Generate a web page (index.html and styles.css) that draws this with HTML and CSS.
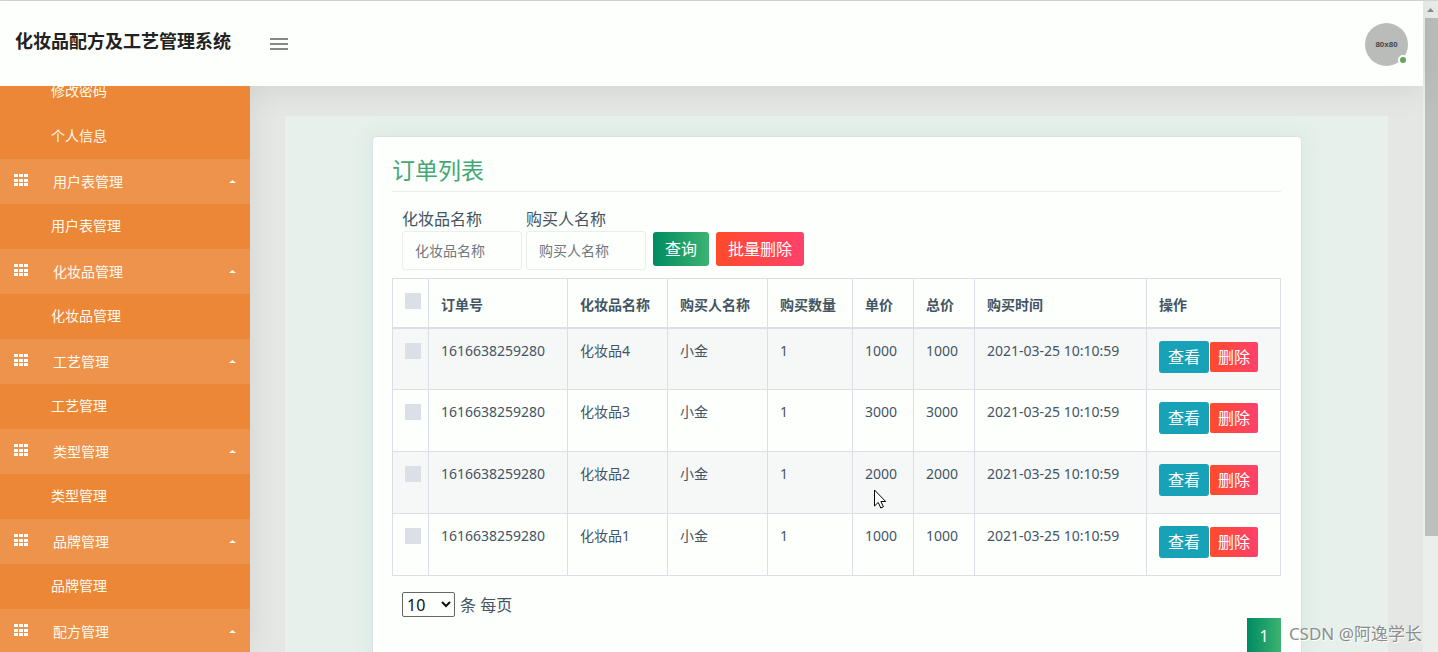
FILE: index.html
```html
<!DOCTYPE html>
<html lang="zh-CN">
<head>
<meta charset="utf-8">
<title>化妆品配方及工艺管理系统</title>
<link rel="stylesheet" href="styles.css">
</head>
<body>
<svg class="defs" aria-hidden="true">
  <symbol id="grid" viewBox="0 0 14 12"><path d="M0 0h4v3H0zM5 0h4v3H5zM10 0h4v3h-4zM0 5h4v3H0zM5 5h4v3H5zM10 5h4v3h-4zM0 9h4v3H0zM5 9h4v3H5zM10 9h4v3h-4z"/></symbol>
  <symbol id="caret" viewBox="0 0 7 3"><path d="M0 3L3.5 0L7 3z"/></symbol>
</svg>
<div class="window">
  <div class="page">
    <header class="topbar">
      <h1 class="brand">化妆品配方及工艺管理系统</h1>
      <button class="menu-toggle" type="button" aria-label="菜单"><svg width="18" height="12" viewBox="0 0 18 12"><path d="M0 0h18v2H0zM0 5h18v2H0zM0 10h18v2H0z"/></svg></button>
      <div class="avatar">80x80<span class="status"></span></div>
    </header>
    <div class="body">
      <nav class="sidebar">
        <div class="menu">
          <a class="sub" href="#">修改密码</a>
          <a class="sub" href="#">个人信息</a>
          <button class="group" type="button"><svg class="ico"><use href="#grid"/></svg>用户表管理<svg class="caret"><use href="#caret"/></svg></button>
          <a class="sub" href="#">用户表管理</a>
          <button class="group" type="button"><svg class="ico"><use href="#grid"/></svg>化妆品管理<svg class="caret"><use href="#caret"/></svg></button>
          <a class="sub" href="#">化妆品管理</a>
          <button class="group" type="button"><svg class="ico"><use href="#grid"/></svg>工艺管理<svg class="caret"><use href="#caret"/></svg></button>
          <a class="sub" href="#">工艺管理</a>
          <button class="group" type="button"><svg class="ico"><use href="#grid"/></svg>类型管理<svg class="caret"><use href="#caret"/></svg></button>
          <a class="sub" href="#">类型管理</a>
          <button class="group" type="button"><svg class="ico"><use href="#grid"/></svg>品牌管理<svg class="caret"><use href="#caret"/></svg></button>
          <a class="sub" href="#">品牌管理</a>
          <button class="group" type="button"><svg class="ico"><use href="#grid"/></svg>配方管理<svg class="caret"><use href="#caret"/></svg></button>
        </div>
      </nav>
      <main class="content">
        <div class="panel">
          <section class="card">
            <h2 class="title">订单列表</h2>
            <form class="filters">
              <div class="field"><label for="f1">化妆品名称</label><input id="f1" type="text" placeholder="化妆品名称"></div>
              <div class="field"><label for="f2">购买人名称</label><input id="f2" type="text" placeholder="购买人名称"></div>
              <div class="actions">
                <button class="btn green" type="button">查询</button>
                <button class="btn red" type="button">批量删除</button>
              </div>
            </form>
            <table class="orders">
              <colgroup><col class="c-check"><col class="c-order"><col class="c-name"><col class="c-name"><col class="c-count"><col class="c-price"><col class="c-price"><col class="c-time"><col></colgroup>
              <thead>
                <tr><th><input type="checkbox" aria-label="全选"></th><th>订单号</th><th>化妆品名称</th><th>购买人名称</th><th>购买数量</th><th>单价</th><th>总价</th><th>购买时间</th><th>操作</th></tr>
              </thead>
              <tbody>
                <tr><td><input type="checkbox" aria-label="选择化妆品4"></td><td>1616638259280</td><td>化妆品4</td><td>小金</td><td>1</td><td>1000</td><td>1000</td><td>2021-03-25 10:10:59</td><td><div class="ops"><button class="btn view" type="button">查看</button><button class="btn red small" type="button">删除</button></div></td></tr>
                <tr><td><input type="checkbox" aria-label="选择化妆品3"></td><td>1616638259280</td><td>化妆品3</td><td>小金</td><td>1</td><td>3000</td><td>3000</td><td>2021-03-25 10:10:59</td><td><div class="ops"><button class="btn view" type="button">查看</button><button class="btn red small" type="button">删除</button></div></td></tr>
                <tr><td><input type="checkbox" aria-label="选择化妆品2"></td><td>1616638259280</td><td>化妆品2</td><td>小金</td><td>1</td><td>2000</td><td>2000</td><td>2021-03-25 10:10:59</td><td><div class="ops"><button class="btn view" type="button">查看</button><button class="btn red small" type="button">删除</button></div></td></tr>
                <tr><td><input type="checkbox" aria-label="选择化妆品1"></td><td>1616638259280</td><td>化妆品1</td><td>小金</td><td>1</td><td>1000</td><td>1000</td><td>2021-03-25 10:10:59</td><td><div class="ops"><button class="btn view" type="button">查看</button><button class="btn red small" type="button">删除</button></div></td></tr>
              </tbody>
            </table>
            <div class="page-size">
              <select id="size"><option>10</option><option>20</option></select>
              <label for="size">条 每页</label>
            </div>
            <div class="pager"><button type="button">1</button></div>
          </section>
        </div>
      </main>
    </div>
  </div>
  <div class="scrollbar"><svg width="7" height="4" viewBox="0 0 7 4"><path d="M0 4L3.5 0L7 4z"/></svg><div class="thumb"></div></div>
</div>
<span class="watermark">CSDN @阿逸学长</span>
<svg class="cursor" width="13" height="20" viewBox="0 0 13 20"><path d="M.5 1v16l3.7-3.6 2.6 5.6 2.6-1.2-2.5-5.3h4.8z"/></svg>
</body>
</html>
```
FILE: styles.css
```css
* { box-sizing: border-box; }
body {
  margin: 0;
  overflow: hidden;
  background: #fcfffc;
  color: #455463;
  font: 14px/20px "Noto Sans", "Noto Sans CJK SC", sans-serif;
}
button, input, select { font: inherit; color: inherit; margin: 0; }
button { border: 0; cursor: pointer; }
.defs { position: absolute; width: 0; height: 0; }
.window { display: flex; height: 100vh; border-top: 1px solid #d7d8dd; }
.page { flex: 1; min-width: 0; display: flex; flex-direction: column; }

.topbar {
  position: relative;
  z-index: 2;
  flex: none;
  display: flex;
  align-items: center;
  height: 85px;
  padding: 0 15px;
  background: #fcfffc;
  box-shadow: 0 0 36px rgba(0, 0, 0, .1);
}
.brand { margin: 0 39px 5px 0; font-size: 18px; line-height: 24px; color: #222; }
.menu-toggle { display: flex; padding: 0; background: none; fill: #858885; }
.avatar {
  position: relative;
  width: 43px;
  height: 43px;
  margin: 2px 0 0 auto;
  border-radius: 50%;
  background: #babcba;
  color: #444;
  font: bold 8px/43px "Liberation Sans", sans-serif;
  text-align: center;
}
.status {
  position: absolute;
  right: 0;
  bottom: 1px;
  width: 10px;
  height: 10px;
  border: 2px solid #fcfffc;
  border-radius: 50%;
  background: #69a35f;
}

.body { flex: 1; min-height: 0; display: flex; }
.sidebar {
  position: relative;
  z-index: 3;
  flex: none;
  width: 250px;
  background: #eb8736;
  box-shadow: 0 0 30px rgba(0, 0, 0, .08);
  clip-path: inset(0 -40px 0 0);
}
.menu { display: flex; flex-direction: column; margin-top: -17px; }
.sub, .group { flex: none; height: 45px; color: #fffaf0; }
.sub { padding-left: 51px; line-height: 44px; text-decoration: none; }
.group {
  display: flex;
  align-items: center;
  padding: 0 14px;
  background: #ed934b;
  text-align: left;
}
.ico { width: 14px; height: 12px; margin: 0 25px 3px 0; fill: #fff; }
.caret { width: 7px; height: 3px; margin-left: auto; fill: #fff; }

.content { flex: 1; min-width: 0; padding: 30px 35px 0; background: #e5e7e4; overflow: hidden; }
.panel { padding: 20px 86px 20px 87px; background: #e7f0ea; }
.card {
  padding: 20px 20px 20px 19px;
  border: 1px solid #dce1e8;
  border-radius: 4px;
  background: #fcfffc;
  box-shadow: 0 0 20px rgba(120, 190, 195, .16);
}
.title {
  margin: 0 0 15px;
  padding-bottom: 7px;
  border-bottom: 1px solid #e8edea;
  color: #43a873;
  font-size: 23px;
  line-height: 27px;
  font-weight: 400;
}
.filters { display: flex; align-items: flex-end; gap: 4px; padding: 0 10px; font-size: 16px; line-height: 24px; }
.field { display: flex; flex-direction: column; width: 120px; }
.field input {
  width: 100%;
  height: 39px;
  padding: 0 12px;
  border: 1px solid #e7f0ea;
  border-radius: 3px;
  background: #fcfffc;
  font-size: 14px;
}
.field input::placeholder { color: #73787e; opacity: 1; }
.actions { display: flex; gap: 7px; padding: 0 0 4px 3px; }
.btn { height: 34px; padding: 0 12px; border-radius: 3px; color: #fff; font-size: 16px; line-height: 24px; }
.green, .pager button { background: linear-gradient(90deg, #008b62, #3cb371); }
.red { background: linear-gradient(90deg, #ff4b2b, #ff416c); }
.view { height: 32px; padding: 0 9px; background: #17a2b8; }
.small { height: 30px; padding: 0 8px; border-radius: 2px; }

.orders { width: 100%; margin-top: 8px; border-collapse: collapse; table-layout: fixed; }
.c-check { width: 36px; }
.c-order { width: 139px; }
.c-name { width: 100px; }
.c-count { width: 85px; }
.c-price { width: 61px; }
.c-time { width: 172px; }
.orders th, .orders td {
  padding: 12px 0 0 12px;
  border: 1px solid #dadee5;
  text-align: left;
  vertical-align: top;
  white-space: nowrap;
}
.orders th { height: 49px; padding-top: 16px; border-bottom: 2px solid #dadee5; }
.orders td { height: 62px; }
.orders tbody tr:nth-child(odd) { background: #f6f8f7; }
.orders input { appearance: none; display: block; width: 16px; height: 16px; margin-top: 2px; background: #dae0e5; }
.orders th input { margin-top: -2px; }
.ops { display: flex; align-items: center; gap: 1px; }

.page-size { display: flex; align-items: center; gap: 5px; padding: 16px 10px 0; font-size: 16px; line-height: 24px; }
.page-size select {
  width: 53px;
  height: 25px;
  border: 1px solid #666;
  border-radius: 2px;
  background: #fcfffc;
  color: #111;
}
.pager { display: flex; justify-content: flex-end; margin-top: 1px; }
.pager button { width: 34px; height: 36px; color: #fff; font-size: 16px; }

.scrollbar {
  flex: none;
  display: flex;
  flex-direction: column;
  align-items: flex-end;
  width: 15px;
  background: #eceeec;
}
.scrollbar svg { flex: none; margin: 7px 4px 6px; fill: #8b8d8b; }
.thumb { width: 13px; height: 518px; background: #bdbfbd; }

.watermark {
  position: absolute;
  right: 16px;
  bottom: 6px;
  z-index: 4;
  color: #8c8e8c;
  font-size: 17px;
  line-height: 24px;
  text-shadow: 1px 1px 0 #fff;
}
.cursor { position: absolute; left: 874px; top: 489px; z-index: 4; fill: #fff; stroke: #000; }
```
